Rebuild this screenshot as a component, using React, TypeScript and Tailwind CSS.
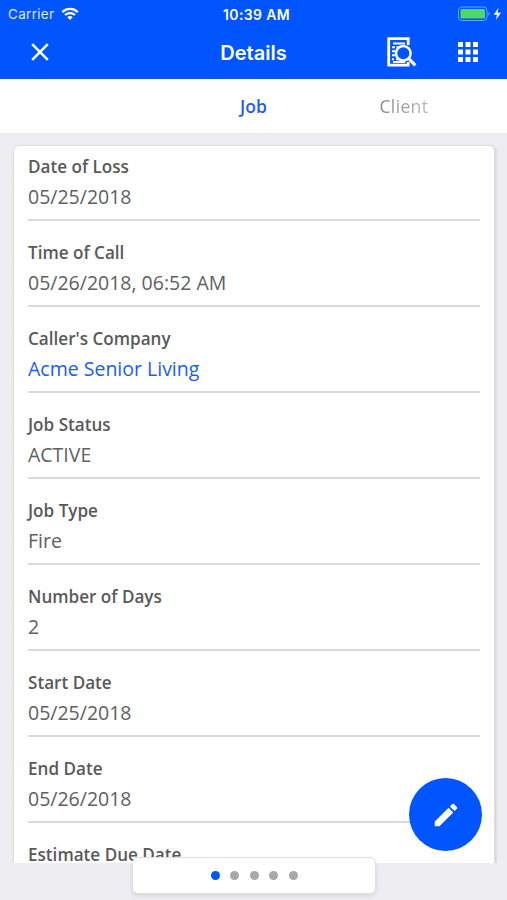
const fields = [
  { label: "Date of Loss", value: "05/25/2018" },
  { label: "Time of Call", value: "05/26/2018, 06:52 AM" },
  { label: "Caller's Company", value: "Acme Senior Living", link: true },
  { label: "Job Status", value: "ACTIVE" },
  { label: "Job Type", value: "Fire" },
  { label: "Number of Days", value: "2" },
  { label: "Start Date", value: "05/25/2018" },
  { label: "End Date", value: "05/26/2018" },
  { label: "Estimate Due Date", value: "" },
];

function StatusBar() {
  return (
    <div className="grid grid-cols-3 items-center h-[27px] font-['Inter',sans-serif] text-[13.5px] leading-[27px]">
      <div className="flex items-center gap-[7px] pl-2 pt-px text-[#dce8ff]">
        <span className="tracking-[0.3px]">Carrier</span>
        <svg width="18" height="14" viewBox="0 0 18 14" fill="none" className="-mt-px">
          <path d="M1.3 5.1A11 11 0 0 1 16.7 5.1" stroke="white" strokeWidth="2.3" />
          <path d="M4 8.1A7.2 7.2 0 0 1 14 8.1" stroke="white" strokeWidth="2.1" />
          <path d="M9 13L6.3 10.3A3.8 3.8 0 0 1 11.7 10.3Z" fill="white" />
        </svg>
      </div>
      <div className="text-center text-[14px] font-semibold tracking-[0.35px] pl-1.5 pt-px">
        10:39 AM
      </div>
      <div className="flex items-center justify-end pr-[5px]">
        <svg width="44" height="16" viewBox="0 0 44 16">
          <rect x="0.5" y="1" width="28.5" height="13.5" rx="3.5" fill="none" stroke="#6e9fff" />
          <rect x="2.5" y="3" width="24.5" height="9.5" rx="1.5" fill="#4cd964" />
          <path d="M30.5 5.5Q33 7.8 30.5 10Z" fill="#6e9fff" />
          <path d="M40.5 1.8L35.7 8.7H39L37.8 14L43 6.8H39.5Z" fill="white" />
        </svg>
      </div>
    </div>
  );
}

function Header() {
  return (
    <header className="h-[79px] shrink-0 bg-[#0055ff] text-white">
      <StatusBar />
      <div className="grid grid-cols-[120px_1fr_120px] items-center h-[50px]">
        <button className="pl-[31px]">
          <svg width="18" height="18" viewBox="0 0 18 18" fill="none" stroke="white" strokeWidth="2.5">
            <path d="M1.2 1.2L16.8 16.8M16.8 1.2L1.2 16.8" />
          </svg>
        </button>
        <h1 className="text-center font-['Inter',sans-serif] text-[20px] font-semibold tracking-[0px] pt-px">
          Details
        </h1>
        <div className="flex items-center">
          <svg width="30" height="31" viewBox="0 0 30 31" fill="none" stroke="white">
            <path d="M21.2 8V1.7H1.7V28.2H21.2V25" strokeWidth="2.8" />
            <path d="M6 6.5H18M5 10.2H8M9.5 10.2H12M5 14.2H8M5 18.2H8M5 22.2H7M9 22.2H12M6 25H18" strokeWidth="1.9" />
            <circle cx="16.3" cy="16.2" r="7.3" fill="#0055ff" strokeWidth="2.5" />
            <path d="M21.5 21.4L28.3 28.3" strokeWidth="3.2" />
          </svg>
          <svg width="20" height="20" viewBox="0 0 20 20" fill="white" className="ml-[41px]">
            {[0, 7.5, 15].map((y) =>
              [0, 7.5, 15].map((x) => (
                <rect key={`${x}-${y}`} x={x} y={y} width="5" height="5" />
              ))
            )}
          </svg>
        </div>
      </div>
    </header>
  );
}

export default function App() {
  return (
    <div className="relative flex flex-col h-[900px] w-[507px] overflow-hidden bg-[#eeeef2] font-['Open_Sans',sans-serif]">
      <Header />

      {/* Tabs */}
      <nav className="grid grid-cols-[1fr_94px_1fr] items-center h-[54px] shrink-0 bg-white text-[17.5px]">
        <span />
        <span className="text-center font-semibold text-[#1a5df5]">Job</span>
        <span className="justify-self-start ml-[79px] bg-linear-to-r from-[#858585] to-[#b8b8b8] bg-clip-text tracking-[0.35px] text-transparent">
          Client
        </span>
      </nav>

      {/* Job details */}
      <main className="h-[730px] shrink-0 overflow-hidden pt-3 pl-[13px] pr-3">
        <section className="h-[900px] rounded-md border border-[#e0e0e3] bg-white px-3.5 shadow-[1px_1px_3px_rgba(0,0,0,0.15)]">
          {fields.map((field) => (
            <div key={field.label} className="h-[86px] pt-[9px]">
              <div className="h-[66px] border-b-2 border-[#dadada]">
                <div className="text-[17.1px] leading-6 font-semibold text-[#595959]">
                  {field.label}
                </div>
                <div
                  className={
                    field.link
                      ? "mt-1.5 text-[19.5px] leading-6 text-[#1a5df5]"
                      : "mt-1.5 text-[19.5px] leading-6 text-[#606060]"
                  }
                >
                  {field.value}
                </div>
              </div>
            </div>
          ))}
        </section>
      </main>

      {/* Edit button */}
      <button className="absolute left-[409px] top-[778px] flex size-[73px] items-center justify-center rounded-full bg-[#0055ff]">
        <svg width="30" height="30" viewBox="0 0 24 24" fill="white">
          <path d="M3 17.25V21h3.75L17.81 9.94l-3.75-3.75L3 17.25zM20.71 7.04a1 1 0 0 0 0-1.41l-2.34-2.34a1 1 0 0 0-1.41 0l-1.83 1.83 3.75 3.75 1.83-1.83z" />
        </svg>
      </button>

      {/* Page indicator */}
      <div className="absolute left-[132px] top-[857px] flex h-[37px] w-[244px] items-center justify-center gap-[10.5px] rounded-md border border-[#e0e0e3] bg-white shadow-[0_2px_4px_rgba(0,0,0,0.1)]">
        <span className="size-[9px] rounded-full bg-[#0055ff]" />
        <span className="size-[9px] rounded-full bg-[#a8a8a8]" />
        <span className="size-[9px] rounded-full bg-[#a8a8a8]" />
        <span className="size-[9px] rounded-full bg-[#a8a8a8]" />
        <span className="size-[9px] rounded-full bg-[#a8a8a8]" />
      </div>
    </div>
  );
}
